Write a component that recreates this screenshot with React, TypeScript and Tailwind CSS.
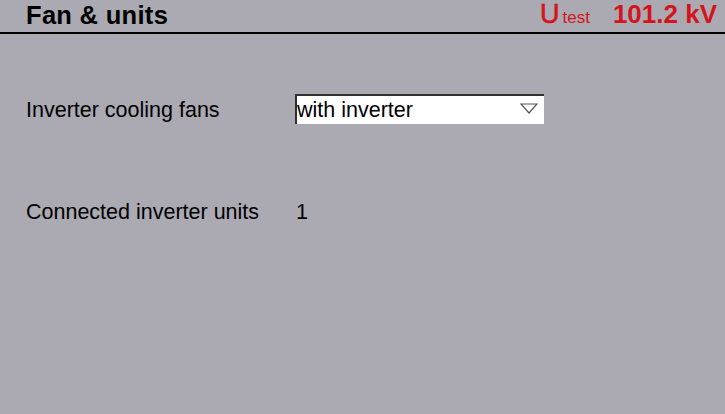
export default function App() {
  return (
    <div
      className="w-[725px] h-[414px] bg-[#abaab2] text-black overflow-hidden"
      style={{ fontFamily: '"Liberation Sans", Arial, sans-serif' }}
    >
      <div className="h-[34px] flex items-end justify-between border-b-2 border-black pl-[26px] pr-[8px]">
        <div className="text-[25.5px] font-bold leading-[30px] pb-[2px] tracking-[0.3px]">Fan &amp; units</div>
        <div className="flex items-baseline text-[#d4141c] pb-[2px]">
          <span className="text-[27px] leading-[31px] [-webkit-text-stroke:0.6px_#d4141c]">U</span>
          <span className="text-[17px] leading-[20px] ml-[3px]">test</span>
          <span className="text-[26px] leading-[30px] font-bold ml-[23px]">101.2 kV</span>
        </div>
      </div>

      <div className="pl-[26px] pt-[60px]">
        <div className="flex items-center h-[30px]">
          <div className="w-[269px] text-[21.5px] pt-[3px]">Inverter cooling fans</div>
          <div className="w-[249px] h-[30px] bg-white border-t-2 border-l-2 border-[#303030] flex items-center justify-between pr-[6px]">
            <span className="text-[21.5px] leading-[25px]">with inverter</span>
            <svg width="18" height="12" viewBox="0 0 18 12" className="mb-[2px]">
              <path d="M1 1 L17 1 L9 10 Z" fill="none" stroke="#555" strokeWidth="1.2" />
            </svg>
          </div>
        </div>

        <div className="flex items-center h-[30px] mt-[72px]">
          <div className="w-[270px] text-[21.5px] pt-[2px]">Connected inverter units</div>
          <div className="text-[21.5px] pt-[2px]">1</div>
        </div>
      </div>
    </div>
  )
}
